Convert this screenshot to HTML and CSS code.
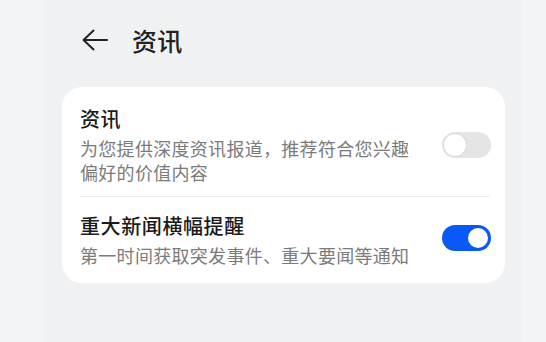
FILE: index.html
```html
<!DOCTYPE html>
<html lang="zh-CN">
<head>
<meta charset="utf-8">
<title>资讯</title>
<link rel="stylesheet" href="styles.css">
</head>
<body>
<div class="frame">
  <div class="gutter"></div>
  <main class="page">
    <header class="topbar">
      <svg class="back" width="26" height="22" viewBox="0 0 26 22" aria-hidden="true">
        <path d="M1.5 11 H25 M11.5 1.5 L1.5 11 L11.5 20.5" fill="none" stroke="#222" stroke-width="2" stroke-linecap="round" stroke-linejoin="round"/>
      </svg>
      <h1 class="title">资讯</h1>
    </header>
    <section class="card">
      <div class="item item-first">
        <div class="text">
          <div class="item-title">资讯</div>
          <div class="item-sub">为您提供深度资讯报道，推荐符合您兴趣偏好的价值内容</div>
        </div>
        <span class="switch"><span class="knob"></span></span>
      </div>
      <div class="divider"></div>
      <div class="item item-second">
        <div class="text">
          <div class="item-title">重大新闻横幅提醒</div>
          <div class="item-sub">第一时间获取突发事件、重大要闻等通知</div>
        </div>
        <span class="switch on"><span class="knob"></span></span>
      </div>
    </section>
  </main>
  <div class="gutter"></div>
</div>
</body>
</html>
```

FILE: styles.css
```css
* { box-sizing: border-box; }

html, body {
  margin: 0;
  padding: 0;
}

body {
  width: 546px;
  height: 342px;
  overflow: hidden;
  background: #f2f3f4;
  font-family: "Noto Sans CJK SC", "Noto Sans", sans-serif;
}

.frame {
  display: grid;
  grid-template-columns: 44px 1fr 25px;
  height: 342px;
}

.gutter {
  background: #f3f4f5;
}

.page {
  background: #f0f1f3;
}

.topbar {
  display: flex;
  align-items: center;
  height: 80px;
  padding-left: 38px;
  gap: 24px;
}

.back {
  display: block;
  flex: none;
}

.title {
  margin: 0;
  font-size: 25px;
  line-height: 32px;
  font-weight: 500;
  color: #222;
  letter-spacing: 0.3px;
}

.card {
  margin: 7px 16px 0 18px;
  background: #fff;
  border-radius: 20px;
  padding: 0 14px 0 18px;
}

.item {
  display: flex;
  align-items: center;
  gap: 18px;
}

.item-first {
  padding: 18px 0 12px;
}

.item-second {
  padding: 15px 0 16px;
}

.text {
  flex: 1;
  min-width: 0;
}

.item-title {
  font-size: 20px;
  line-height: 28px;
  font-weight: 500;
  color: #1a1a1a;
  letter-spacing: 0.6px;
  margin-bottom: 3px;
}

.item-sub {
  font-size: 18px;
  line-height: 24px;
  color: #7b7b7b;
  letter-spacing: 0.3px;
}

.divider {
  height: 1px;
  background: #ededed;
  margin-right: 1px;
}

.switch {
  flex: none;
  position: relative;
  width: 49px;
  height: 26px;
  border-radius: 13px;
  background: #e5e5e5;
}

.switch .knob {
  position: absolute;
  top: 2px;
  left: 2px;
  width: 22px;
  height: 22px;
  border-radius: 50%;
  background: #fff;
  box-shadow: 0 0 0 1px #dadada;
}

.switch.on {
  background: #0a59f7;
  margin-bottom: 3px;
}

.switch.on .knob {
  top: 3px;
  left: auto;
  right: 3px;
  width: 20px;
  height: 20px;
  box-shadow: none;
}
```
